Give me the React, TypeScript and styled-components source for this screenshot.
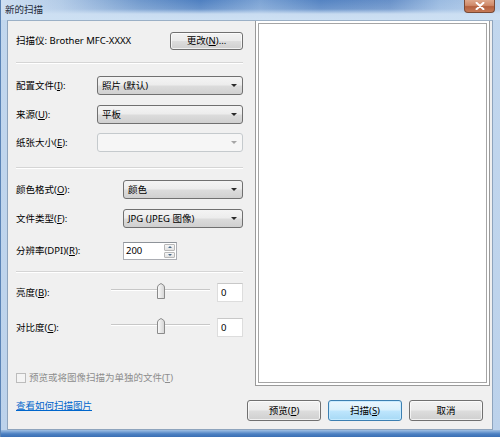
import styled, { createGlobalStyle } from 'styled-components';

const GlobalStyle = createGlobalStyle`
    html, body {
        margin: 0;
        padding: 0;
        background: #ffffff;
    }
    body {
        font-family: "Noto Sans", "Noto Sans CJK SC", sans-serif;
        font-size: 9.5px;
        color: #000000;
    }
`;

const comboRows = [
    { label: '配置文件', key: 'I', value: '照片 (默认)', labelWidth: 81, disabled: false, top: 12 },
    { label: '来源', key: 'U', value: '平板', labelWidth: 81, disabled: false, top: 10 },
    { label: '纸张大小', key: 'E', value: '', labelWidth: 81, disabled: true, top: 9 },
];

const formatRows = [
    { label: '颜色格式', key: 'O', value: '颜色', labelWidth: 107, disabled: false, top: 11 },
    { label: '文件类型', key: 'F', value: 'JPG (JPEG 图像)', labelWidth: 107, disabled: false, top: 10 },
];

const sliderRows = [
    { label: '亮度', key: 'B', value: 0, percent: 50, top: 10 },
    { label: '对比度', key: 'C', value: 0, percent: 50, top: 16 },
];

function Label({ text, accessKey }: { text: string; accessKey: string }) {
    return (
        <LabelText>
            {text}(<u>{accessKey}</u>):
        </LabelText>
    );
}

export default function App() {
    return (
        <>
            <GlobalStyle />
            <Window>
                <TitleBar>
                    <TitleText>新的扫描</TitleText>
                    <CloseButton>
                        <svg width='10' height='8' viewBox='0 0 10 8'>
                            <path d='M1.5 0.8 L8.5 7.2 M8.5 0.8 L1.5 7.2' stroke='#ffffff' strokeWidth='2' strokeLinecap='round' />
                        </svg>
                    </CloseButton>
                </TitleBar>
                <Client>
                    <LeftPanel>
                        <Row $top={11} $height={18}>
                            <ScannerText>扫描仪: Brother MFC-XXXX</ScannerText>
                            <PushButton $width={73}>
                                更改(<u>N</u>)...
                            </PushButton>
                        </Row>
                        <Separator $top={12} />
                        {comboRows.map((row) => (
                            <Row key={row.key} $top={row.top} $height={19}>
                                <LabelCell $width={row.labelWidth}>
                                    <Label text={row.label} accessKey={row.key} />
                                </LabelCell>
                                <Combo $disabled={row.disabled}>
                                    <ComboText>{row.value}</ComboText>
                                    <ComboArrow $disabled={row.disabled} />
                                </Combo>
                            </Row>
                        ))}
                        <Separator $top={15} />
                        {formatRows.map((row) => (
                            <Row key={row.key} $top={row.top} $height={19}>
                                <LabelCell $width={row.labelWidth}>
                                    <Label text={row.label} accessKey={row.key} />
                                </LabelCell>
                                <Combo $disabled={row.disabled}>
                                    <ComboText>{row.value}</ComboText>
                                    <ComboArrow $disabled={row.disabled} />
                                </Combo>
                            </Row>
                        ))}
                        <Row $top={14} $height={18}>
                            <LabelCell $width={107}>
                                <Label text='分辨率(DPI)' accessKey='R' />
                            </LabelCell>
                            <Spin>
                                <SpinInput>200</SpinInput>
                                <SpinButtons>
                                    <SpinButton>
                                        <SpinArrow $up />
                                    </SpinButton>
                                    <SpinButton>
                                        <SpinArrow />
                                    </SpinButton>
                                </SpinButtons>
                            </Spin>
                        </Row>
                        <Separator $top={11} />
                        {sliderRows.map((row) => (
                            <Row key={row.key} $top={row.top} $height={19}>
                                <LabelCell $width={95}>
                                    <Label text={row.label} accessKey={row.key} />
                                </LabelCell>
                                <Slider>
                                    <SliderTrack />
                                    <SliderThumb style={{ left: `${row.percent}%` }}>
                                        <svg width='8' height='16' viewBox='0 0 8 16'>
                                            <defs>
                                                <linearGradient id={`thumb-${row.key}`} x1='0' y1='0' x2='1' y2='0'>
                                                    <stop offset='0' stopColor='#fbfbfb' />
                                                    <stop offset='1' stopColor='#d4d4d4' />
                                                </linearGradient>
                                            </defs>
                                            <path
                                                d='M0.5 15.5 L0.5 4 Q0.5 2 4 0.5 Q7.5 2 7.5 4 L7.5 15.5 Z'
                                                fill={`url(#thumb-${row.key})`}
                                                stroke='#8b8b8b'
                                            />
                                        </svg>
                                    </SliderThumb>
                                </Slider>
                                <ValueBox>{row.value}</ValueBox>
                            </Row>
                        ))}
                        <Row $top={34} $height={13}>
                            <CheckBox />
                            <CheckLabel>
                                预览或将图像扫描为单独的文件(<u>T</u>)
                            </CheckLabel>
                        </Row>
                        <Row $top={15} $height={14}>
                            <HelpLink>查看如何扫描图片</HelpLink>
                        </Row>
                    </LeftPanel>
                    <RightPanel>
                        <PreviewFrame>
                            <PreviewInner />
                        </PreviewFrame>
                        <ButtonBar>
                            <PushButton $width={74} $height={21}>
                                预览(<u>P</u>)
                            </PushButton>
                            <PushButton $width={74} $height={21} $default>
                                扫描(<u>S</u>)
                            </PushButton>
                            <PushButton $width={74} $height={21}>
                                取消
                            </PushButton>
                        </ButtonBar>
                    </RightPanel>
                </Client>
            </Window>
        </>
    );
}

const Window = styled.div`
    width: 500px;
    height: 437px;
    box-sizing: border-box;
    display: flex;
    flex-direction: column;
    padding: 0 7px 7px 6px;
    border-left: 1px solid #5b84b6;
    background:
        linear-gradient(180deg, rgba(255, 255, 255, 0) 0, rgba(255, 255, 255, 0) 430px, #9fbfe3 430px, #4a7fc2 434px, #3b6fb3 437px),
        linear-gradient(180deg, #c2d7ee 0, #bcd2eb 100%);
    overflow: hidden;
`;

const TitleBar = styled.div`
    height: 20px;
    margin: 0 -7px 0 -6px;
    padding: 0 5px 0 4px;
    display: flex;
    justify-content: space-between;
    align-items: flex-start;
    background:
        linear-gradient(180deg, rgba(206, 224, 243, 0) 0, rgba(206, 224, 243, 0.2) 45%, rgba(206, 224, 243, 0.95) 70%, #cde0f3 100%),
        linear-gradient(90deg, #cfe0f2 0, #b3cbe7 12%, #6f98cc 28%, #4e7fc0 40%, #7ca3d4 52%, #5483c2 64%, #6790c8 78%, #9bbbe1 88%, #b5cde9 100%);
`;

const TitleText = styled.span`
    margin-top: 3px;
    font-size: 9.5px;
    line-height: 14px;
    color: #1e2a3a;
`;

const CloseButton = styled.div`
    width: 31px;
    height: 13px;
    box-sizing: border-box;
    display: flex;
    align-items: center;
    justify-content: center;
    border: 1px solid #7a4a36;
    border-top: none;
    border-radius: 0 0 4px 4px;
    background: linear-gradient(180deg, #dfa88c 0, #cf8a6a 45%, #b4613f 55%, #c67a57 100%);
`;

const Client = styled.div`
    flex: 1;
    display: flex;
    background: #f0f0f0;
    border: 1px solid #8ea4bd;
    border-top-color: #9bb0c6;
`;

const LeftPanel = styled.div`
    width: 240px;
    box-sizing: border-box;
    padding: 0 4px 0 8px;
    display: flex;
    flex-direction: column;
`;

const Row = styled.div<{ $top: number; $height: number }>`
    margin-top: ${(p) => p.$top}px;
    height: ${(p) => p.$height}px;
    display: flex;
    align-items: center;
    flex-shrink: 0;
`;

const Separator = styled.div<{ $top: number }>`
    margin-top: ${(p) => p.$top}px;
    height: 0;
    border-top: 1px solid #d5d5d5;
    border-bottom: 1px solid #ffffff;
    flex-shrink: 0;
`;

const ScannerText = styled.span`
    flex: 1;
    line-height: 14px;
`;

const LabelCell = styled.div<{ $width: number }>`
    width: ${(p) => p.$width}px;
    flex-shrink: 0;
`;

const LabelText = styled.span`
    line-height: 14px;
    white-space: nowrap;
`;

const Combo = styled.div<{ $disabled?: boolean }>`
    flex: 1;
    height: 100%;
    box-sizing: border-box;
    display: flex;
    align-items: center;
    padding: 0 5px 0 4px;
    border: 1px solid ${(p) => (p.$disabled ? '#c5cacd' : '#707070')};
    border-radius: 3px;
    background: ${(p) =>
        p.$disabled
            ? '#f6f6f6'
            : 'linear-gradient(180deg, #f4f4f4 0, #ececec 48%, #dcdcdc 52%, #d0d0d0 100%)'};
`;

const ComboText = styled.span`
    flex: 1;
    line-height: 14px;
    white-space: nowrap;
`;

const ComboArrow = styled.span<{ $disabled?: boolean }>`
    width: 0;
    height: 0;
    border-left: 3px solid transparent;
    border-right: 3px solid transparent;
    border-top: 3px solid ${(p) => (p.$disabled ? '#a6a6a6' : '#2a2a2a')};
`;

const Spin = styled.div`
    width: 54px;
    height: 100%;
    box-sizing: border-box;
    display: flex;
    background: #ffffff;
    border: 1px solid #abadb3;
    border-top-color: #8e9399;
`;

const SpinInput = styled.span`
    flex: 1;
    padding-left: 2px;
    line-height: 16px;
`;

const SpinButtons = styled.div`
    width: 11px;
    display: flex;
    flex-direction: column;
    gap: 1px;
    padding: 1px 1px 1px 0;
`;

const SpinButton = styled.div`
    flex: 1;
    display: flex;
    align-items: center;
    justify-content: center;
    border: 1px solid #b8b8b8;
    border-radius: 1px;
    background: linear-gradient(180deg, #f6f6f6 0, #e2e2e2 100%);
`;

const SpinArrow = styled.span<{ $up?: boolean }>`
    width: 0;
    height: 0;
    border-left: 2px solid transparent;
    border-right: 2px solid transparent;
    ${(p) => (p.$up ? 'border-bottom: 2px solid #4a6a8a;' : 'border-top: 2px solid #4a6a8a;')}
`;

const Slider = styled.div`
    width: 99px;
    height: 100%;
    position: relative;
    display: flex;
    align-items: center;
    margin-right: 7px;
`;

const SliderTrack = styled.div`
    width: 100%;
    height: 1px;
    margin-top: -5px;
    background: #c7c7c7;
    border-bottom: 1px solid #ffffff;
`;

const SliderThumb = styled.div`
    position: absolute;
    top: 0;
    width: 8px;
    height: 16px;
    transform: translateX(-4px);
    display: flex;
`;

const ValueBox = styled.div`
    flex: 1;
    height: 100%;
    box-sizing: border-box;
    padding-left: 3px;
    line-height: 17px;
    background: #ffffff;
    border: 1px solid #dddddd;
    border-top-color: #c8c8c8;
`;

const CheckBox = styled.div`
    width: 10px;
    height: 10px;
    box-sizing: border-box;
    margin-right: 3px;
    border: 1px solid #bcbcbc;
    background: #f4f4f4;
`;

const CheckLabel = styled.span`
    color: #8d8d8d;
    line-height: 14px;
`;

const HelpLink = styled.a`
    color: #0066cc;
    text-decoration: underline;
    line-height: 14px;
    cursor: pointer;
`;

const RightPanel = styled.div`
    flex: 1;
    display: flex;
    flex-direction: column;
    padding-right: 9px;
`;

const PreviewFrame = styled.div`
    height: 365px;
    margin: 0 -7px 0 8px;
    box-sizing: border-box;
    padding: 2px;
    background: #ffffff;
    border: 1px solid #9a9a9a;
    border-top: none;
    display: flex;
`;

const PreviewInner = styled.div`
    flex: 1;
    border: 1px solid #a5a5a5;
    background: #ffffff;
`;

const ButtonBar = styled.div`
    margin-top: 14px;
    display: flex;
    gap: 7px;
`;

const PushButton = styled.div<{ $width: number; $height?: number; $default?: boolean }>`
    width: ${(p) => p.$width}px;
    height: ${(p) => p.$height ?? 18}px;
    box-sizing: border-box;
    display: flex;
    align-items: center;
    justify-content: center;
    line-height: 14px;
    white-space: nowrap;
    border: 1px solid ${(p) => (p.$default ? '#3c7fb1' : '#707070')};
    border-radius: 3px;
    box-shadow: inset 0 0 0 1px ${(p) => (p.$default ? 'rgba(200, 235, 255, 0.9)' : 'rgba(255, 255, 255, 0.7)')};
    background: ${(p) =>
        p.$default
            ? 'linear-gradient(180deg, #eaf6fd 0, #d9f0fc 48%, #bee6fd 52%, #a7d9f5 100%)'
            : 'linear-gradient(180deg, #f2f2f2 0, #ebebeb 48%, #dddddd 52%, #cfcfcf 100%)'};
`;
